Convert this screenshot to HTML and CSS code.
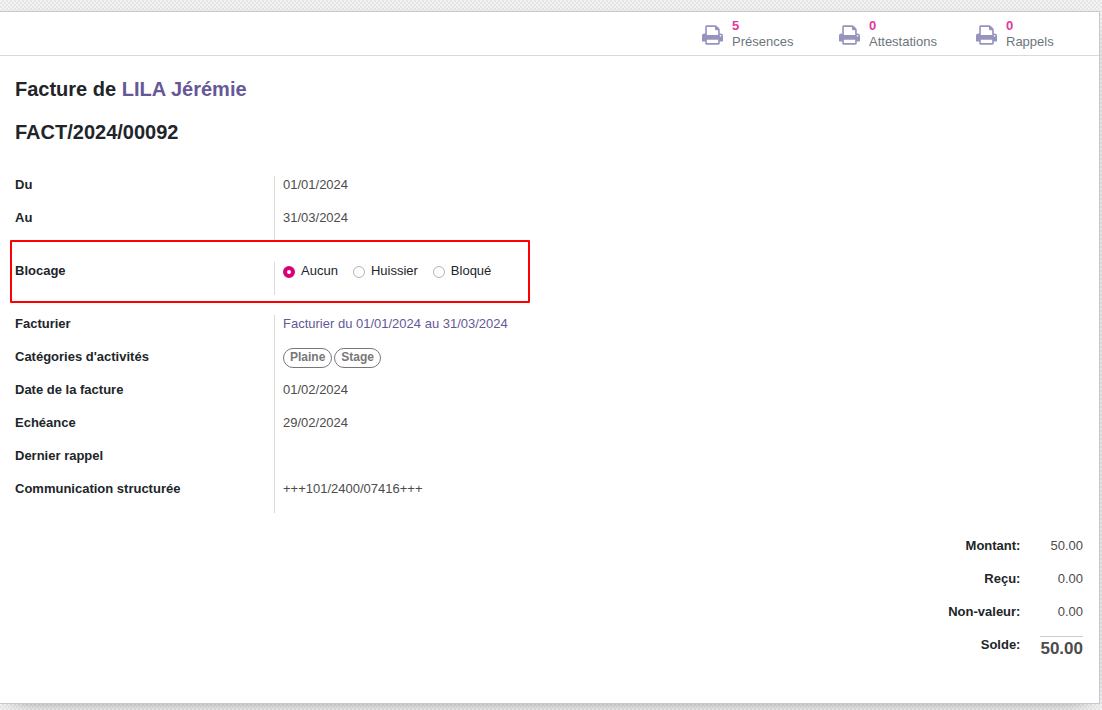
FILE: index.html
```html
<!DOCTYPE html>
<html lang="fr">
<head>
<meta charset="utf-8">
<meta name="viewport" content="width=device-width, initial-scale=1">
<title>FACT/2024/00092</title>
<link rel="stylesheet" href="styles.css">
</head>
<body>
<svg class="sprite" aria-hidden="true">
  <symbol id="printer" viewBox="0 0 1664 1536">
    <path d="M384 1408h896v-256H384v256zm0-640h896V384h-160q-40 0-68-28t-28-68V128H384v640zm1152 64q0-26-19-45t-45-19-45 19-19 45 19 45 45 19 45-19 19-45zm128 0v416q0 13-9.500 22.500t-22.500 9.500h-224v160q0 40-28 68t-68 28H352q-40 0-68-28t-28-68v-160H32q-13 0-22.500-9.500T0 1248V832q0-79 56.500-135.500T192 640h64V96q0-40 28-68t68-28h672q40 0 88 20t76 48l152 152q28 28 48 76t20 88v256h64q79 0 135.500 56.500T1664 832z"/>
  </symbol>
</svg>
<main class="sheet">
  <nav class="button-box">
    <button type="button" class="stat">
      <svg class="stat-icon" aria-hidden="true"><use href="#printer"/></svg>
      <span class="stat-text"><span class="stat-value">5</span><span>Présences</span></span>
    </button>
    <button type="button" class="stat">
      <svg class="stat-icon" aria-hidden="true"><use href="#printer"/></svg>
      <span class="stat-text"><span class="stat-value">0</span><span>Attestations</span></span>
    </button>
    <button type="button" class="stat">
      <svg class="stat-icon" aria-hidden="true"><use href="#printer"/></svg>
      <span class="stat-text"><span class="stat-value">0</span><span>Rappels</span></span>
    </button>
  </nav>
  <div class="content">
    <header class="titles">
      <h1 class="title">Facture de <a href="#">LILA Jérémie</a></h1>
      <h2 class="title">FACT/2024/00092</h2>
    </header>
    <div class="groups">
      <dl class="group">
        <dt>Du</dt><dd>01/01/2024</dd>
        <dt>Au</dt><dd>31/03/2024</dd>
      </dl>
      <div class="group highlighted" role="radiogroup" aria-labelledby="blocage">
        <span class="label" id="blocage">Blocage</span>
        <div class="field radios">
          <label class="radio"><input type="radio" name="blocage" checked>Aucun</label>
          <label class="radio"><input type="radio" name="blocage">Huissier</label>
          <label class="radio"><input type="radio" name="blocage">Bloqué</label>
        </div>
      </div>
      <dl class="group">
        <dt>Facturier</dt><dd><a href="#">Facturier du 01/01/2024 au 31/03/2024</a></dd>
        <dt>Catégories d'activités</dt><dd class="tags"><span class="tag">Plaine</span><span class="tag">Stage</span></dd>
        <dt>Date de la facture</dt><dd>01/02/2024</dd>
        <dt>Echéance</dt><dd>29/02/2024</dd>
        <dt>Dernier rappel</dt><dd></dd>
        <dt>Communication structurée</dt><dd>+++101/2400/07416+++</dd>
      </dl>
    </div>
    <dl class="totals">
      <dt>Montant:</dt><dd>50.00</dd>
      <dt>Reçu:</dt><dd>0.00</dd>
      <dt>Non-valeur:</dt><dd>0.00</dd>
      <dt>Solde:</dt><dd class="balance">50.00</dd>
    </dl>
  </div>
</main>
</body>
</html>
```
FILE: styles.css
```css
* {
  box-sizing: border-box;
}

body {
  margin: 0;
  padding: 11px 2px 6px 0;
  background: repeating-conic-gradient(#e6e6e6 0 25%, #f3f3f3 0 50%) 0 0 / 4px 4px;
  color: #212529;
  font: 13px/18px "Liberation Sans", Arial, sans-serif;
}

a {
  color: #665896;
  text-decoration: none;
}

dl,
dd {
  margin: 0;
}

.sprite {
  display: none;
}

.sheet {
  background: #fff;
  border: 1px solid #c8c8d3;
  border-left: 0;
  box-shadow: 0 5px 20px -15px #000;
}

.button-box {
  display: flex;
  justify-content: flex-end;
  height: 44px;
  border-bottom: 1px solid #dadada;
}

.stat {
  display: flex;
  align-items: center;
  gap: 9px;
  width: 137px;
  padding: 0 0 0 14px;
  border: 0;
  background: none;
  color: #6c757d;
  font: 13px/16px "Liberation Sans", Arial, sans-serif;
  text-align: left;
}

.stat-icon {
  width: 21px;
  height: 20px;
  margin-top: 3px;
  fill: #9694bf;
}

.stat-text {
  display: flex;
  flex-direction: column;
}

.stat-value {
  color: #e0399a;
  font-weight: bold;
}

.content {
  padding: 20px 16px 34px 15px;
}

.titles {
  display: flex;
  flex-direction: column;
  gap: 17px;
}

.title {
  margin: 0;
  font-size: 20px;
  line-height: 26px;
}

.groups {
  display: flex;
  flex-direction: column;
  gap: 20px;
  width: 50%;
  margin-top: 31px;
}

.group {
  display: grid;
  grid-template-columns: 259px 1fr;
  grid-auto-rows: 33px;
}

dt,
.label {
  font-weight: bold;
}

.group dd,
.field {
  padding-left: 8px;
  border-left: 1px solid #dadada;
  color: #4c4c4c;
}

.highlighted {
  position: relative;
}

.highlighted::after {
  content: "";
  position: absolute;
  inset: -22px 19px -8px -5px;
  border: 2px solid #f00;
  border-radius: 1px;
  pointer-events: none;
}

.radios {
  display: flex;
  align-items: flex-start;
  gap: 15px;
}

.radio {
  display: flex;
  align-items: center;
  gap: 6px;
  color: #212529;
}

.radio input {
  appearance: none;
  width: 12px;
  height: 12px;
  margin: 2px 0 0;
  border: 1px solid #adb5bd;
  border-radius: 50%;
  background: #fff;
}

.radio input:checked {
  border: 4px solid #d6007b;
}

.tags {
  display: flex;
  align-items: flex-start;
  gap: 2px;
}

.tag {
  padding: 0 6px 2px;
  border: 1px solid #777;
  border-radius: 10px;
  color: #777;
  font-size: 12px;
  font-weight: bold;
  line-height: 16px;
}

.totals {
  display: grid;
  grid-template-columns: auto auto;
  grid-auto-rows: 33px;
  justify-content: end;
  align-items: start;
  column-gap: 20px;
  margin-top: 24px;
  text-align: right;
}

.totals dd {
  color: #4c4c4c;
}

.totals .balance {
  padding-top: 2px;
  border-top: 1px solid #ccc;
  font-size: 17px;
  font-weight: bold;
  line-height: 20px;
}
```
